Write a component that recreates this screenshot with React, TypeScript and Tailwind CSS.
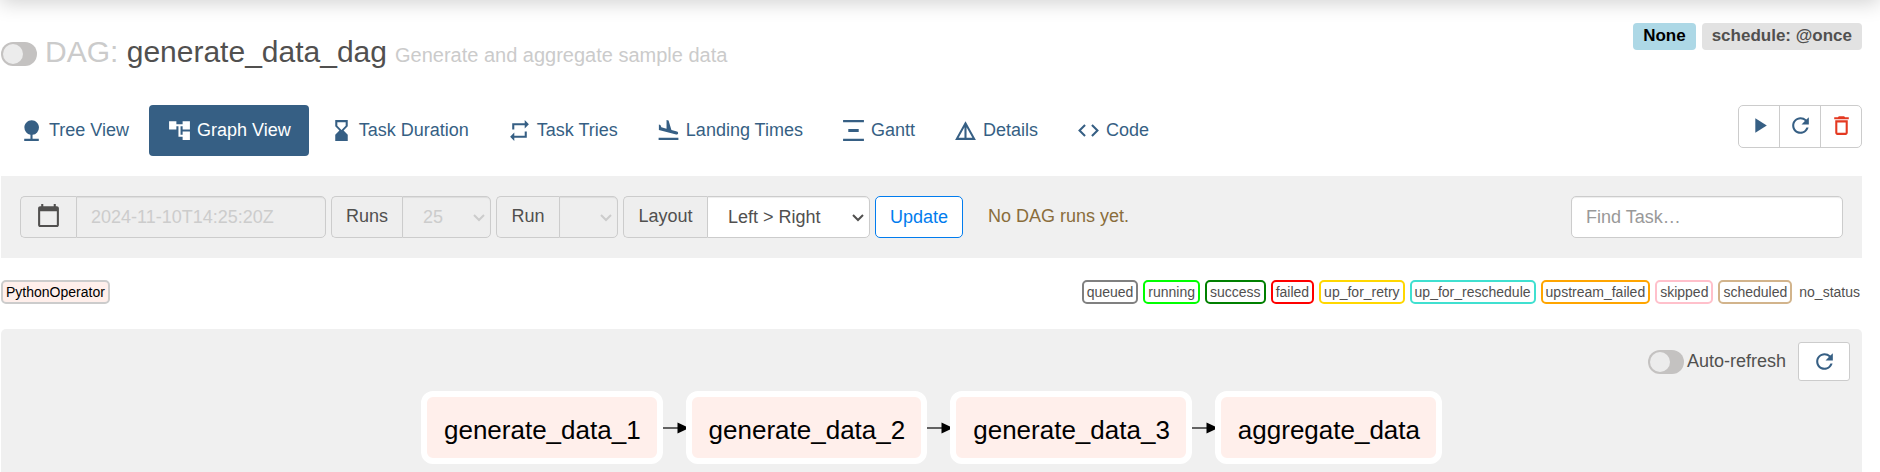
import React from "react";
import type { IconType } from "react-icons";
import {
  MdAccountTree,
  MdCalendarToday,
  MdCode,
  MdDeleteOutline,
  MdDetails,
  MdFlightLand,
  MdHourglassBottom,
  MdNature,
  MdPlayArrow,
  MdRefresh,
  MdRepeat,
  MdVerticalDistribute,
} from "react-icons/md";

type Tab = { label: string; icon: IconType; active?: boolean };

const tabs: Tab[] = [
  { label: "Tree View", icon: MdNature },
  { label: "Graph View", icon: MdAccountTree, active: true },
  { label: "Task Duration", icon: MdHourglassBottom },
  { label: "Task Tries", icon: MdRepeat },
  { label: "Landing Times", icon: MdFlightLand },
  { label: "Gantt", icon: MdVerticalDistribute },
  { label: "Details", icon: MdDetails },
  { label: "Code", icon: MdCode },
];

const states = [
  { label: "queued", box: "border-2 px-[3px] border-[#808080]" },
  { label: "running", box: "border-2 px-[3px] border-[#00ff00]" },
  { label: "success", box: "border-2 px-[3px] border-[#008000]" },
  { label: "failed", box: "border-2 px-[3px] border-[#ff0000]" },
  { label: "up_for_retry", box: "border-2 px-[3px] border-[#ffd700]" },
  { label: "up_for_reschedule", box: "border-2 px-[3px] border-[#40e0d0]" },
  { label: "upstream_failed", box: "border-2 px-[3px] border-[#ffa500]" },
  { label: "skipped", box: "border-2 px-[3px] border-[#ffc0cb]" },
  { label: "scheduled", box: "border-2 px-[3px] border-[#d2b48c]" },
  { label: "no_status", box: "px-0.5 py-0.5" },
];

const tasks = ["generate_data_1", "generate_data_2", "generate_data_3", "aggregate_data"];

function Toggle({ label }: { label: string }) {
  return (
    <input
      type="checkbox"
      role="switch"
      aria-label={label}
      className="h-6 w-9 shrink-0 appearance-none rounded-full bg-[#c4c2c1] p-0.5 before:block before:size-5 before:rounded-full before:bg-[#ececec] checked:bg-[#017cee] checked:before:ml-3"
    />
  );
}

function SelectGroup(props: {
  id: string;
  label: string;
  options: string[];
  width: string;
  addon: string;
  disabled?: boolean;
}) {
  const { id, label, options, width, addon, disabled } = props;
  return (
    <div className="flex h-[42px]">
      <label
        htmlFor={id}
        className={`flex items-center justify-center rounded-l-[5px] border border-r-0 border-[#ccc] bg-[#eee] pb-0.5 ${addon}`}
      >
        {label}
      </label>
      <div className={`relative ${width}`}>
        <select
          id={id}
          disabled={disabled}
          className="size-full appearance-none rounded-r-[5px] border border-[#ccc] bg-white pl-5 shadow-[inset_0_1px_1px_rgba(0,0,0,0.075)] disabled:bg-[#eee] disabled:text-[#ccc] disabled:opacity-100"
        >
          {options.map((o) => (
            <option key={o}>{o}</option>
          ))}
        </select>
        <svg
          viewBox="0 0 12 8"
          className={`pointer-events-none absolute top-[18px] right-1.5 h-2 w-3 fill-none stroke-2 ${disabled ? "stroke-[#ccc]" : "stroke-[#51504f]"}`}
        >
          <path d="M1 1l5 5 5-5" />
        </svg>
      </div>
    </div>
  );
}

function Arrow() {
  return (
    <svg viewBox="0 0 23 12" className="h-3 w-[23px] shrink-0">
      <path d="M0 6H16" stroke="#333" strokeWidth="1.5" />
      <path d="M14.500 0.500L23 4.500V7.500L14.500 11.500z" fill="#000" />
    </svg>
  );
}

export default function App() {
  return (
    <div className="flex min-h-screen flex-col overflow-hidden bg-white pr-[18px] pl-px font-['Liberation_Sans',Arial,sans-serif] text-[18px] leading-[25px] text-[#51504f]">
      <div className="-mt-10 -mr-[18px] -ml-px h-10 shadow-[0_3px_20px_rgba(0,0,0,0.18)]" />

      <header className="flex items-start justify-between pt-[23px]">
        <h1 className="flex items-center pt-2">
          <Toggle label="Pause or unpause DAG" />
          <span className="ml-2 flex items-baseline gap-2 text-[30px] leading-[42px]">
            <span>
              <span className="text-[#cbcbcb]">DAG:</span> generate_data_dag
            </span>
            <span className="text-[20px] text-[#cbcbcb]">Generate and aggregate sample data</span>
          </span>
        </h1>
        <div className="flex gap-1.5 text-[17px] leading-[26px] font-bold">
          <span className="rounded bg-[#add8e6] px-2.5 pb-px text-black">None</span>
          <span className="rounded bg-[#e2e2e2] px-2.5 pb-px">schedule: @once</span>
        </div>
      </header>

      <div className="mt-[29px] flex items-start justify-between">
        <nav className="flex gap-0.5">
          {tabs.map(({ label, icon: Icon, active }) => (
            <a
              key={label}
              href="#"
              aria-current={active ? "page" : undefined}
              className={`flex h-[51px] items-center gap-[5px] rounded px-[18px] ${active ? "bg-[#365f84] text-white" : "text-[#365f84]"}`}
            >
              <Icon className="size-[25px]" />
              {label}
            </a>
          ))}
        </nav>
        <div className="flex h-[43px] divide-x divide-[#ccc] rounded-[5px] border border-[#ccc] text-[#365f84]">
          <button type="button" aria-label="Trigger DAG" className="flex w-[41px] items-center justify-center pb-0.5">
            <MdPlayArrow className="size-[25px]" />
          </button>
          <button type="button" aria-label="Refresh" className="flex w-[41px] items-center justify-center pb-0.5">
            <MdRefresh className="size-[25px]" />
          </button>
          <button type="button" aria-label="Delete DAG" className="flex w-10 items-center justify-center pb-0.5 text-[#e43921]">
            <MdDeleteOutline className="size-[25px]" />
          </button>
        </div>
      </div>

      <form className="mt-5 flex items-center justify-between bg-[#f0f0f0] px-[19px] py-5">
        <div className="flex items-center gap-[5px]">
          <div className="flex h-[42px]">
            <label
              htmlFor="base-date"
              aria-label="Base date"
              className="flex w-14 items-center justify-center rounded-l-[5px] border border-r-0 border-[#ccc] bg-[#eee] pb-1"
            >
              <MdCalendarToday className="size-[25px]" />
            </label>
            <input
              id="base-date"
              disabled
              defaultValue="2024-11-10T14:25:20Z"
              className="w-[250px] rounded-r-[5px] border border-[#ccc] bg-[#eee] px-3.5 text-[#ccc] shadow-[inset_0_1px_1px_rgba(0,0,0,0.075)]"
            />
          </div>
          <SelectGroup id="runs" label="Runs" options={["25"]} addon="w-[71px]" width="w-[89px]" disabled />
          <SelectGroup id="run" label="Run" options={[""]} addon="w-[63px]" width="w-[59px]" disabled />
          <SelectGroup
            id="layout"
            label="Layout"
            options={["Left > Right", "Right > Left", "Top > Bottom", "Bottom > Top"]}
            addon="w-[84px]"
            width="w-[163px]"
          />
          <button type="button" className="h-[42px] w-[88px] rounded-[5px] border border-[#017cee] bg-white text-[#017cee]">
            Update
          </button>
          <span className="ml-5 pb-0.5 text-[#8a6d3b]">No DAG runs yet.</span>
        </div>
        <input
          type="text"
          aria-label="Find task"
          placeholder="Find Task…"
          className="h-[42px] w-[272px] rounded-[5px] border border-[#ccc] bg-white px-3.5 shadow-[inset_0_1px_1px_rgba(0,0,0,0.075)] placeholder:text-[#999]"
        />
      </form>

      <div className="mt-[22px] flex items-center justify-between text-[14px] leading-5">
        <span className="rounded-[5px] border-2 border-[#ccc] bg-[#ffefeb] px-[3px] text-black">PythonOperator</span>
        <div className="flex gap-[5px]">
          {states.map(({ label, box }) => (
            <span key={label} className={`rounded-[5px] bg-white ${box}`}>
              {label}
            </span>
          ))}
        </div>
      </div>

      <main className="mt-[25px] flex-1 rounded-t-[5px] bg-[#f0f0f0]">
        <div className="flex items-center justify-end pt-[13px] pr-3">
          <label className="flex items-center gap-[3px]">
            <Toggle label="Auto-refresh" />
            Auto-refresh
          </label>
          <button
            type="button"
            aria-label="Refresh graph"
            className="ml-3 flex h-[39px] w-[52px] items-center justify-center rounded-[3px] border border-[#ccc] bg-white text-[#365f84]"
          >
            <MdRefresh className="size-[25px]" />
          </button>
        </div>
        <div className="mt-2.5 flex items-center justify-center text-[26px] leading-[56px] text-black">
          {tasks.map((task, i) => (
            <React.Fragment key={task}>
              {i > 0 && <Arrow />}
              <div className="rounded-xl border-6 border-white bg-[#ffefeb] pt-[5px] pr-4 pl-[17px]">{task}</div>
            </React.Fragment>
          ))}
        </div>
      </main>
    </div>
  );
}
